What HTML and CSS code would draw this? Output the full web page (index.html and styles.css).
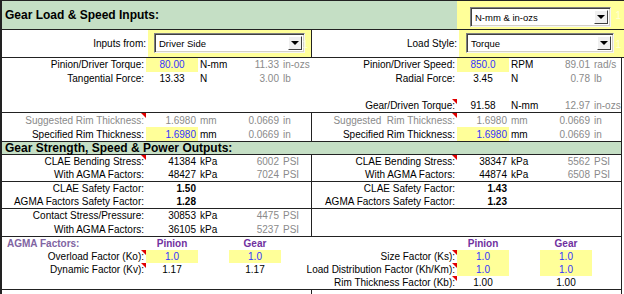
FILE: index.html
```html
<!DOCTYPE html>
<html lang="en">
<head>
  <meta charset="UTF-8" />
  <title>Gear Load &amp; Speed</title>
  <link rel="stylesheet" href="styles.css">
</head>
<body>

  <div class="sheet">
    <div class="head-row">
      <div class="title">Gear Load &amp; Speed Inputs:</div>
      <div class="pick pick-units">
        <div class="combo"><span>N-mm &amp; in-ozs</span><i class="drop"></i></div>
        <span class="link">1</span>
      </div>
    </div>

    <div class="choose-row">
      <div class="side left">
        <span class="lb">Inputs from:</span>
        <div class="pick pick-from">
          <div class="combo"><span>Driver Side</span><i class="drop"></i></div>
          <span class="link">1</span>
        </div>
      </div>
      <div class="side right">
        <span class="lb">Load Style:</span>
        <div class="pick pick-style">
          <div class="combo"><span>Torque</span><i class="drop"></i></div>
          <span class="link">1</span>
        </div>
      </div>
    </div>

    <!-- torque / speed -->
    <div class="sec loads">
      <div class="half">
        <span class="lb">Pinion/Driver Torque:</span><span class="v in">80.00</span><span class="u">N-mm</span><span class="vr g">11.33</span><span class="u g">in-ozs</span>
        <span class="lb">Tangential Force:</span><span class="v">13.33</span><span class="u">N</span><span class="vr g">3.00</span><span class="u g">lb</span>
        <span></span><span></span><span></span><span></span><span></span>
        <span></span><span></span><span></span><span></span><span></span>
      </div>
      <div class="half">
        <span class="lb">Pinion/Driver Speed:</span><span class="v in">850.0</span><span class="u">RPM</span><span class="vr g">89.01</span><span class="u g">rad/s</span>
        <span class="lb">Radial Force:</span><span class="v">3.45</span><span class="u">N</span><span class="vr g">0.78</span><span class="u g">lb</span>
        <span></span><span></span><span></span><span></span><span></span>
        <span class="lb note">Gear/Driven Torque:</span><span class="v">91.58</span><span class="u">N-mm</span><span class="vr g">12.97</span><span class="u g">in-ozs</span>
      </div>
    </div>

    <!-- rim thickness -->
    <div class="sec rim split">
      <div class="half">
        <span class="lb note g">Suggested Rim Thickness:</span><span class="vr g">1.6980</span><span class="u g">mm</span><span class="vr g">0.0669</span><span class="u g">in</span>
        <span class="lb">Specified Rim Thickness:</span><span class="vr in">1.6980</span><span class="u">mm</span><span class="vr g">0.0669</span><span class="u g">in</span>
      </div>
      <div class="half">
        <span class="lb note g">Suggested&nbsp; Rim Thickness:</span><span class="vr g">1.6980</span><span class="u g">mm</span><span class="vr g">0.0669</span><span class="u g">in</span>
        <span class="lb">Specified Rim Thickness:</span><span class="vr in">1.6980</span><span class="u">mm</span><span class="vr g">0.0669</span><span class="u g">in</span>
      </div>
    </div>

    <div class="sec band">
      <div class="title2">Gear Strength, Speed &amp; Power Outputs:</div>
    </div>

    <!-- bending stress -->
    <div class="sec bend split">
      <div class="half">
        <span class="lb note">CLAE Bending Stress:</span><span class="vr">41384</span><span class="u">kPa</span><span class="vr g">6002</span><span class="u g">PSI</span>
        <span class="lb">With AGMA Factors:</span><span class="vr">48427</span><span class="u">kPa</span><span class="vr g">7024</span><span class="u g">PSI</span>
      </div>
      <div class="half">
        <span class="lb note">CLAE Bending Stress:</span><span class="vr">38347</span><span class="u">kPa</span><span class="vr g">5562</span><span class="u g">PSI</span>
        <span class="lb">With AGMA Factors:</span><span class="vr">44874</span><span class="u">kPa</span><span class="vr g">6508</span><span class="u g">PSI</span>
      </div>
    </div>

    <!-- safety factors -->
    <div class="sec safety split">
      <div class="half">
        <span class="lb">CLAE Safety Factor:</span><span class="vr b">1.50</span><span></span><span></span><span></span>
        <span class="lb">AGMA Factors Safety Factor:</span><span class="vr b">1.28</span><span></span><span></span><span></span>
      </div>
      <div class="half">
        <span class="lb">CLAE Safety Factor:</span><span class="vr b">1.43</span><span></span><span></span><span></span>
        <span class="lb">AGMA Factors Safety Factor:</span><span class="vr b">1.23</span><span></span><span></span><span></span>
      </div>
    </div>

    <!-- contact stress -->
    <div class="sec contact split">
      <div class="half">
        <span class="lb">Contact Stress/Pressure:</span><span class="vr">30853</span><span class="u">kPa</span><span class="vr g">4475</span><span class="u g">PSI</span>
        <span class="lb">With AGMA Factors:</span><span class="vr">36105</span><span class="u">kPa</span><span class="vr g">5237</span><span class="u g">PSI</span>
      </div>
      <div class="half"></div>
    </div>

    <!-- AGMA factors -->
    <div class="sec factors">
      <div class="half">
        <span class="group">AGMA Factors:</span><span class="v hd">Pinion</span><span></span><span class="v hd">Gear</span><span></span>
        <span class="lb note">Overload Factor (Ko):</span><span class="v in">1.0</span><span></span><span class="v in">1.0</span><span></span>
        <span class="lb note">Dynamic Factor (Kv):</span><span class="v">1.17</span><span></span><span class="v">1.17</span><span></span>
        <span></span><span></span><span></span><span></span><span></span>
      </div>
      <div class="half">
        <span></span><span class="v hd">Pinion</span><span></span><span class="v hd">Gear</span><span></span>
        <span class="lb note">Size Factor (Ks):</span><span class="v in">1.0</span><span></span><span class="v in">1.0</span><span></span>
        <span class="lb note">Load Distribution Factor (Kh/Km):</span><span class="v in">1.0</span><span></span><span class="v in">1.0</span><span></span>
        <span class="lb note">Rim Thickness Factor (Kb):</span><span class="v">1.00</span><span></span><span class="v">1.00</span><span></span>
      </div>
    </div>

    <div class="sec tail split">
      <div class="half"></div>
      <div class="half"></div>
    </div>
  </div>

</body>
</html>
```

FILE: styles.css
```css
body {
  margin: 0;
  background: #fff;
  font-family: "Liberation Sans", Arial, sans-serif;
  font-size: 10px;
  color: #000;
}
.sheet {
  width: 624px;
  border-top: 1px solid #222;
}

/* top rows with the dropdowns */
.head-row {
  display: flex;
  height: 28px;
  border-left: 2px solid #222;
  border-bottom: 1px solid #222;
}
.title {
  width: 455px;
  box-sizing: border-box;
  padding-left: 3px;
  display: flex;
  align-items: center;
  background: #c5dfc5;
  font-size: 12px;
  font-weight: bold;
}
.pick {
  flex: 1;
  position: relative;
  display: flex;
  background: #ffff99;
}
.pick-units {
  align-items: flex-end;
  padding-bottom: 2px;
}
.pick-units .combo {
  margin-left: 13px;
  width: 141px;
}
.choose-row {
  display: flex;
  height: 27px;
  border-left: 2px solid #222;
  border-bottom: 1px solid #222;
}
.side {
  display: flex;
}
.side.left {
  width: 309px;
  border-right: 1px solid #222;
}
.side.right {
  flex: 1;
}
.side .lb {
  width: 144px;
}
.side.right .lb {
  width: 145px;
}
.pick-from,
.pick-style {
  align-items: flex-start;
  padding-top: 3px;
}
.pick-from .combo {
  margin-left: 6px;
  width: 151px;
}
.pick-style .combo {
  margin-left: 7px;
  width: 148px;
}
.combo {
  height: 20px;
  box-sizing: border-box;
  display: flex;
  align-items: center;
  padding-left: 4px;
  background: #fff;
  border: 1px solid;
  border-color: #808080 #f4f4f4 #f4f4f4 #808080;
  box-shadow: inset 1px 1px 0 #404040, inset -1px -1px 0 #d4d0c8;
  font-size: 9.5px;
}
.drop {
  width: 14px;
  height: 14px;
  box-sizing: border-box;
  margin-left: auto;
  margin-right: 2px;
  display: flex;
  align-items: center;
  justify-content: center;
  background: #f0f0f0;
  border: 1px solid;
  border-color: #fff #404040 #404040 #fff;
}
.drop::after {
  content: '';
  border-top: 4px solid #000;
  border-left: 4px solid transparent;
  border-right: 4px solid transparent;
}
.link {
  position: absolute;
  right: 3px;
  top: 50%;
  transform: translateY(-50%);
  color: #ffffd8;
}

/* sheet body */
.sec {
  display: flex;
  width: 619px;
  border-left: 2px solid #222;
  border-right: 1px solid #222;
  border-bottom: 1px solid #222;
}
.half {
  width: 309px;
  display: grid;
  grid-template-columns: 144px 52px 31px 52px 30px;
}
.half:first-child {
  border-right: 1px solid transparent;
}
.half + .half {
  grid-template-columns: 145px 52px 31px 52px 29px;
}
.split .half:first-child {
  border-right-color: #222;
}
.loads .half,
.contact .half {
  grid-auto-rows: 13.5px;
}
.loads .half {
  height: 54px;
}
.rim .half {
  grid-auto-rows: 14px;
}
.bend .half,
.safety .half {
  grid-auto-rows: 13px;
}
.contact .half {
  height: 27px;
}
.factors .half {
  grid-auto-rows: 13px;
}
.tail {
  height: 6px;
  border-bottom: none;
}
.band {
  height: 12px;
}
.title2 {
  flex: 1;
  padding-left: 3px;
  background: #c5dfc5;
  font-size: 12px;
  font-weight: bold;
  line-height: 12px;
}

/* cells */
.half > span,
.side .lb {
  display: flex;
  align-items: center;
  white-space: nowrap;
  min-width: 0;
}
.lb {
  position: relative;
  justify-content: flex-end;
  padding-right: 2px;
}
.note::after {
  content: '';
  position: absolute;
  top: 0;
  right: 0;
  border-top: 5px solid #e00000;
  border-left: 5px solid transparent;
}
.half > .v {
  justify-content: center;
}
.half > .vr {
  justify-content: flex-end;
  padding-right: 2px;
}
.u {
  padding-left: 2px;
}
.g {
  color: #8a8a8a;
}
.in {
  background: #ffff99;
  color: #3333ff;
}
.b {
  font-weight: bold;
}
.hd {
  color: #7030a0;
  font-weight: bold;
}
.group {
  padding-left: 5px;
  color: #8064a2;
  font-weight: bold;
}
```
